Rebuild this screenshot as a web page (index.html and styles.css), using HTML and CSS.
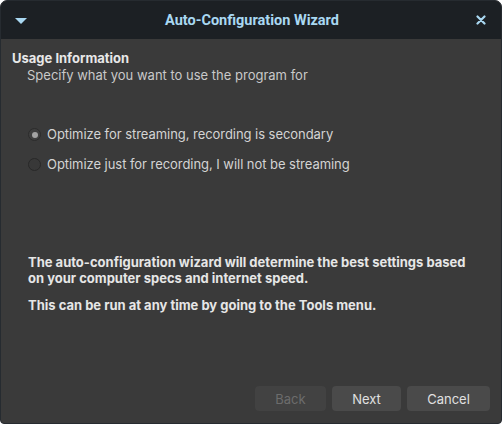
FILE: index.html
```html
<!DOCTYPE html>
<html lang="en">
<head>
<meta charset="utf-8">
<title>Auto-Configuration Wizard</title>
<link rel="stylesheet" href="styles.css">
</head>
<body>
<div class="window">
  <header class="titlebar">
    <span class="tb-btn menu">
      <svg width="12" height="6" viewBox="0 0 12 6"><polygon points="0,0 12,0 6,6" fill="#a9d8f2"/></svg>
    </span>
    <span class="title">Auto-Configuration Wizard</span>
    <span class="tb-btn close">
      <svg width="10" height="10" viewBox="0 0 10 10"><path d="M1.5 1.5 L8.5 8.5 M8.5 1.5 L1.5 8.5" stroke="#a9d8f2" stroke-width="2.2" stroke-linecap="round"/></svg>
    </span>
  </header>
  <main class="content">
    <h1 class="heading">Usage Information</h1>
    <p class="subheading">Specify what you want to use the program for</p>
    <div class="options">
      <label class="option"><span class="radio checked"></span><span>Optimize for streaming, recording is secondary</span></label>
      <label class="option"><span class="radio"></span><span>Optimize just for recording, I will not be streaming</span></label>
    </div>
    <div class="info">
      <p>The auto-configuration wizard will determine the best settings based on your computer specs and internet speed.</p>
      <p>This can be run at any time by going to the Tools menu.</p>
    </div>
  </main>
  <footer class="buttons">
    <button class="btn disabled">Back</button>
    <button class="btn next">Next</button>
    <button class="btn cancel">Cancel</button>
  </footer>
</div>
</body>
</html>
```
FILE: styles.css
```css
html, body {
  margin: 0;
  padding: 0;
  background: #ffffff;
}

.window {
  width: 502px;
  height: 424px;
  box-sizing: border-box;
  display: flex;
  flex-direction: column;
  background: #3a3a3a;
  border: 1px solid #262b30;
  border-radius: 7px 7px 4px 4px;
  overflow: hidden;
  font-family: Inter, "Noto Sans", sans-serif;
  font-size: 13px;
  color: #d6d6d6;
}

.titlebar {
  height: 38px;
  flex: none;
  display: flex;
  align-items: center;
  justify-content: space-between;
  background: #1c2024;
  padding: 0 13px 0 13px;
}

.tb-btn {
  width: 14px;
  display: flex;
  align-items: center;
  justify-content: center;
}

.menu { margin-top: 2px; }

.title {
  font-family: Roboto, "Liberation Sans", sans-serif;
  font-weight: bold;
  font-size: 14.5px;
  color: #a9d8f2;
  margin-left: 2px;
}

.content {
  flex: 1;
  padding: 11px 11px 0 11px;
}

.heading {
  margin: 0;
  font-size: 13px;
  font-weight: bold;
  color: #e8e8e8;
  line-height: 16px;
}

.subheading {
  margin: 0;
  padding-left: 15px;
  line-height: 18px;
  color: #c9c9c9;
}

.options {
  margin-top: 41px;
  padding-left: 16px;
  display: flex;
  flex-direction: column;
  gap: 11px;
}

.option {
  display: flex;
  align-items: center;
  gap: 6px;
  line-height: 19px;
  color: #d4d4d4;
  letter-spacing: -0.05px;
}

.radio {
  width: 13px;
  height: 13px;
  box-sizing: border-box;
  border-radius: 50%;
  border: 1.3px solid #282828;
  background: #383838;
  display: flex;
  align-items: center;
  justify-content: center;
}

.radio.checked {
  border-color: #2c2c2c;
  background: #3f3f3f;
}

.radio.checked::after {
  content: "";
  width: 6px;
  height: 6px;
  border-radius: 50%;
  background: #a4a4a4;
}

.info {
  margin-top: 80px;
  padding-left: 16px;
  padding-right: 20px;
  font-weight: bold;
  color: #e6e6e6;
}

.info p {
  margin: 0 0 11px 0;
  line-height: 16px;
}

.buttons {
  flex: none;
  display: flex;
  justify-content: flex-end;
  gap: 6px;
  padding: 0 11px 12px 0;
}

.btn {
  height: 25px;
  border: none;
  border-radius: 4px;
  background: #4a4a4a;
  color: #e0e0e0;
  font-family: Inter, "Noto Sans", sans-serif;
  font-size: 13px;
  padding: 0;
}

.btn.disabled {
  background: #424242;
  color: #6c6c6c;
  width: 71px;
}

.btn.next { width: 69px; }
.btn.cancel { width: 83px; }
```
